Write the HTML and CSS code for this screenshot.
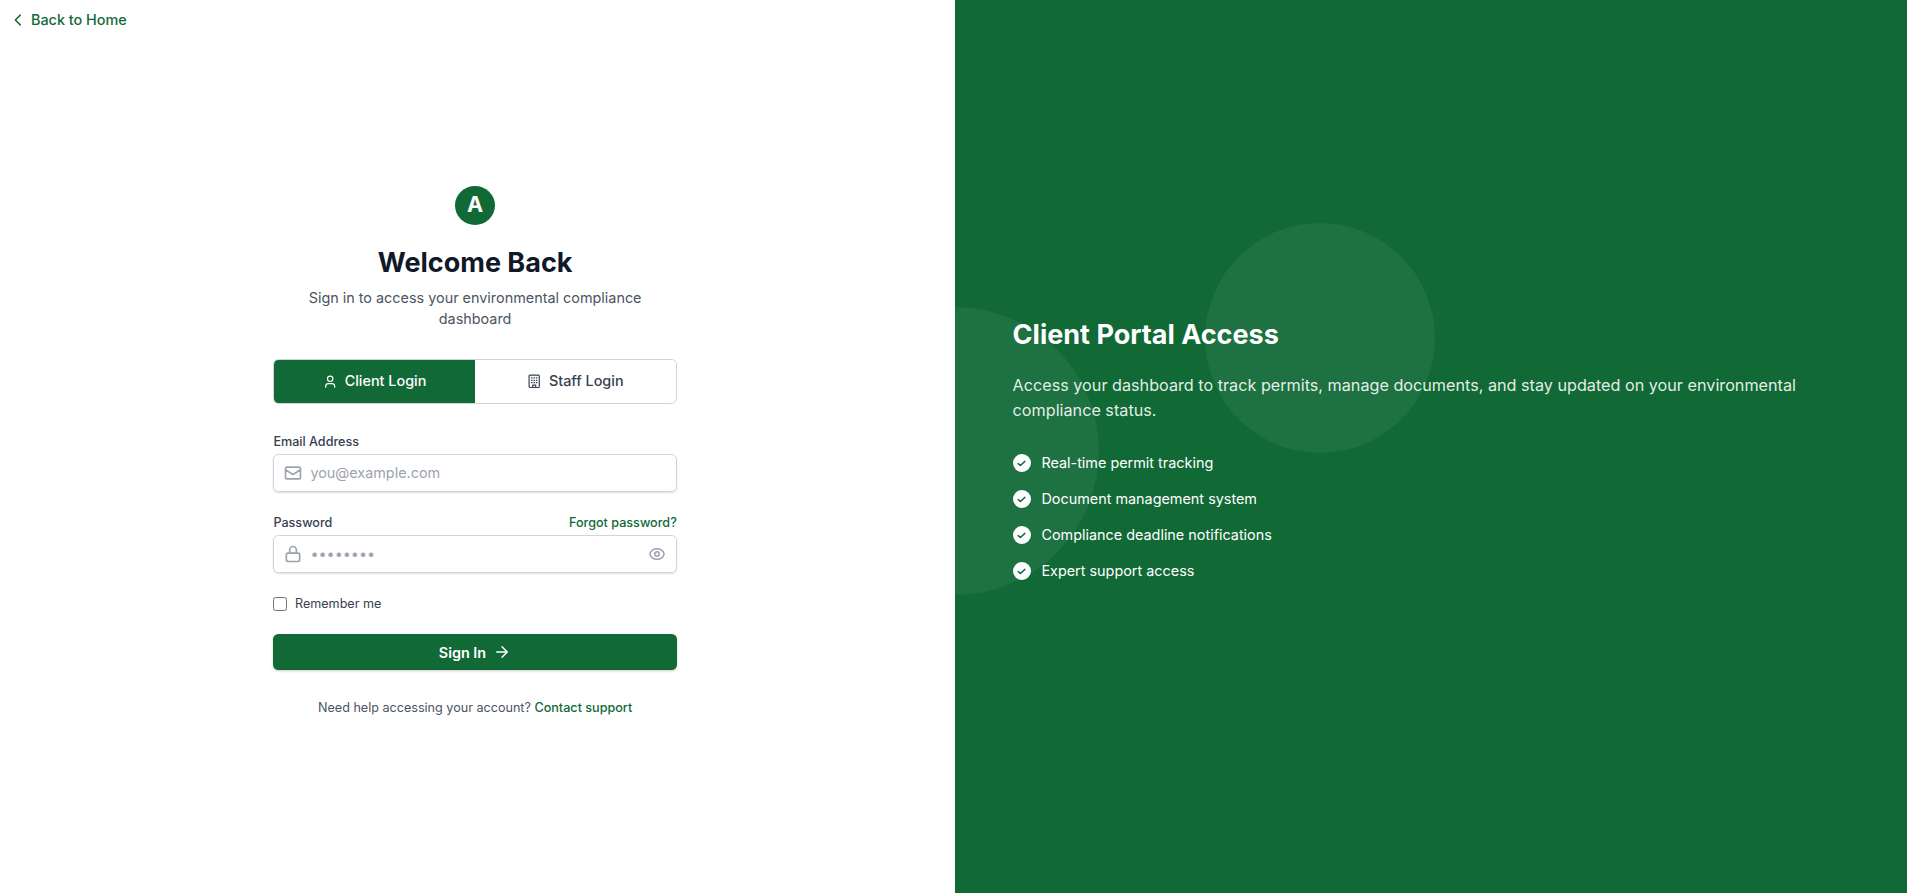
FILE: index.html
```html
<!DOCTYPE html>
<html lang="en">
<head>
<meta charset="utf-8">
<title>Client Portal Login</title>
<link rel="stylesheet" href="styles.css">
</head>
<body>
<div class="page">
  <main class="login">
    <a class="back" href="#"><svg class="back-icon" viewBox="0 0 24 24"><path d="M15 18.500l-6.500-6.500 6.500-6.500"/></svg>Back to Home</a>
    <div class="login-box">
      <header class="head">
        <div class="logo">A</div>
        <h1 class="title">Welcome Back</h1>
        <p class="subtitle">Sign in to access your environmental compliance dashboard</p>
      </header>
      <div class="tabs">
        <button class="tab tab-active" type="button"><svg class="tab-icon" viewBox="0 0 24 24"><circle cx="12" cy="8" r="4.500"/><path d="M4.500 22v-1.500a4.500 4.500 0 0 1 4.500-4.500h6a4.500 4.500 0 0 1 4.500 4.500V22"/></svg>Client Login</button>
        <button class="tab" type="button"><svg class="tab-icon" viewBox="0 0 24 24"><rect x="3.500" y="2" width="17" height="20.500" rx="1.500"/><path d="M9.500 22v-3.500h5V22M7.500 6.500h1M11.500 6.500h1M15.500 6.500h1M7.500 10.500h1M11.500 10.500h1M15.500 10.500h1M7.500 14.500h1M11.500 14.500h1M15.500 14.500h1"/></svg>Staff Login</button>
      </div>
      <form class="form">
        <div class="field">
          <label class="label" for="email">Email Address</label>
          <div class="control">
            <svg class="icon" viewBox="0 0 24 24"><path d="M3 8l7.890 5.260a2 2 0 0 0 2.220 0L21 8M5 19h14a2 2 0 0 0 2-2V7a2 2 0 0 0-2-2H5a2 2 0 0 0-2 2v10a2 2 0 0 0 2 2z"/></svg>
            <input class="input" id="email" type="email" placeholder="you@example.com">
          </div>
        </div>
        <div class="field">
          <div class="label-row"><label class="label" for="password">Password</label><a class="link" href="#">Forgot password?</a></div>
          <div class="control">
            <svg class="icon" viewBox="0 0 24 24"><path d="M6 21h12a2 2 0 0 0 2-2v-6a2 2 0 0 0-2-2H6a2 2 0 0 0-2 2v6a2 2 0 0 0 2 2zM16 11V7a4 4 0 0 0-8 0v4"/></svg>
            <input class="input" id="password" type="password" placeholder="••••••••">
            <svg class="icon icon-eye" viewBox="0 0 24 24"><path d="M15 12a3 3 0 1 1-6 0 3 3 0 0 1 6 0z"/><path d="M2.458 12C3.732 7.943 7.523 5 12 5c4.478 0 8.268 2.943 9.542 7-1.274 4.057-5.064 7-9.542 7-4.477 0-8.268-2.943-9.542-7z"/></svg>
          </div>
        </div>
        <label class="remember"><input class="checkbox" type="checkbox">Remember me</label>
        <button class="submit" type="button">Sign In<svg class="arrow" viewBox="0 0 24 24"><path d="M5 12h14M12 5l7 7-7 7"/></svg></button>
      </form>
      <p class="help">Need help accessing your account? <a class="link" href="#">Contact support</a></p>
    </div>
  </main>
  <aside class="promo">
    <div class="disc disc-large"></div>
    <div class="disc disc-small"></div>
    <div class="promo-body">
      <h2 class="promo-title">Client Portal Access</h2>
      <p class="promo-text">Access your dashboard to track permits, manage documents, and stay updated on your environmental compliance status.</p>
      <ul class="features">
        <li class="feature"><svg class="check" viewBox="0 0 20 20"><circle cx="10" cy="10" r="10"/><path d="M5.800 10.700l2.400 2.100 5-4.600"/></svg>Real-time permit tracking</li>
        <li class="feature"><svg class="check" viewBox="0 0 20 20"><circle cx="10" cy="10" r="10"/><path d="M5.800 10.700l2.400 2.100 5-4.600"/></svg>Document management system</li>
        <li class="feature"><svg class="check" viewBox="0 0 20 20"><circle cx="10" cy="10" r="10"/><path d="M5.800 10.700l2.400 2.100 5-4.600"/></svg>Compliance deadline notifications</li>
        <li class="feature"><svg class="check" viewBox="0 0 20 20"><circle cx="10" cy="10" r="10"/><path d="M5.800 10.700l2.400 2.100 5-4.600"/></svg>Expert support access</li>
      </ul>
    </div>
  </aside>
</div>
</body>
</html>
```
FILE: styles.css
```css
:root { font-size: 14.4px; --green: #116936; }
* { box-sizing: border-box; margin: 0; padding: 0; }
body { font-family: Inter, sans-serif; line-height: 1.5; background: #fff; color: #374151; overflow: hidden; }
svg { display: block; flex: none; fill: none; stroke: currentColor; stroke-width: 2; stroke-linecap: round; stroke-linejoin: round; }
a { color: var(--green); font-weight: 500; text-decoration: none; }
button, input { font: inherit; color: inherit; border: 0; background: none; outline: 0; }
.page { display: grid; grid-template-columns: 955px 1fr; height: 100vh; }
.login { position: relative; padding: 186px 0 0 273.4px; }
.back { position: absolute; left: 9px; top: 9px; display: flex; align-items: center; gap: 4px; }
.back-icon { width: 18px; height: 18px; }
.login-box { width: 403.4px; }
.head { text-align: center; }
.logo { width: 40px; height: 39px; margin: 0 auto; border-radius: 50%; background: var(--green); color: #fff; font: 700 21.6px/37px Inter, sans-serif; }
.title { margin-top: 1.5rem; font-size: 1.875rem; line-height: 2.25rem; font-weight: 700; color: #111827; }
.subtitle { margin-top: 8.4px; line-height: 21px; color: #4b5563; }
.tabs { display: flex; margin-top: 29.6px; border: 1px solid #d1d5db; border-radius: 5.4px; overflow: hidden; }
.tab { flex: 1; display: flex; align-items: center; justify-content: center; gap: 7.2px; padding: 10.4px 1rem 11.2px; font-weight: 500; }
.tab-active { background: var(--green); color: #fff; }
.tab-icon { width: 14.4px; height: 14.4px; margin-top: 1px; }
.form { display: flex; flex-direction: column; gap: 22px; margin-top: 2rem; }
.label-row { display: flex; justify-content: space-between; }
.label, .link, .remember, .help { display: block; font-size: .875rem; line-height: 1.25rem; }
.label { font-weight: 500; }
.control { display: flex; align-items: center; gap: 7px; margin-top: 2.8px; height: 38px; padding: 0 10px 0 9px; border: 1px solid #d1d5db; border-radius: 5.4px; box-shadow: 0 1px 2px rgb(0 0 0 / .13); }
.icon { width: 20px; height: 20px; color: #9ca3af; }
.icon-eye { width: 18px; height: 18px; }
.input { flex: 1; min-width: 0; }
.input::placeholder { color: #9ca3af; opacity: 1; }
.remember { display: flex; align-items: center; gap: .5rem; }
.checkbox { width: 14px; height: 14px; margin-right: .4px; }
.submit { display: flex; align-items: center; justify-content: center; gap: .5rem; height: 36px; margin-top: -.4px; padding-top: 1px; border-radius: 5.4px; background: var(--green); color: #fff; font-weight: 600; box-shadow: 0 1px 3px rgb(0 0 0 / .2); }
.arrow { width: 18px; height: 18px; margin-top: -1px; }
.help { margin-top: 2rem; text-align: center; color: #4b5563; }
.help .link { display: inline; }
.promo { position: relative; overflow: hidden; padding: 318.6px 4rem 0; background: var(--green); color: #fff; }
.disc { position: absolute; border-radius: 50%; background: rgb(255 255 255 / .055); }
.disc-large { left: -144px; top: 307px; width: 288px; height: 288px; }
.disc-small { left: 250px; top: 223px; width: 230.4px; height: 230.4px; }
.promo-body { position: relative; }
.promo-title { font-size: 1.875rem; line-height: 2.25rem; font-weight: 700; }
.promo-text { margin-top: 1.5rem; font-size: 1.125rem; line-height: 1.75rem; color: rgb(255 255 255 / .9); }
.features { display: grid; gap: 1rem; margin-top: 2rem; list-style: none; }
.feature { display: flex; align-items: center; gap: .75rem; }
.check { width: 18px; height: 18px; }
.check circle { fill: #fff; stroke: none; }
.check path { stroke: var(--green); stroke-width: 1.6; }
```
